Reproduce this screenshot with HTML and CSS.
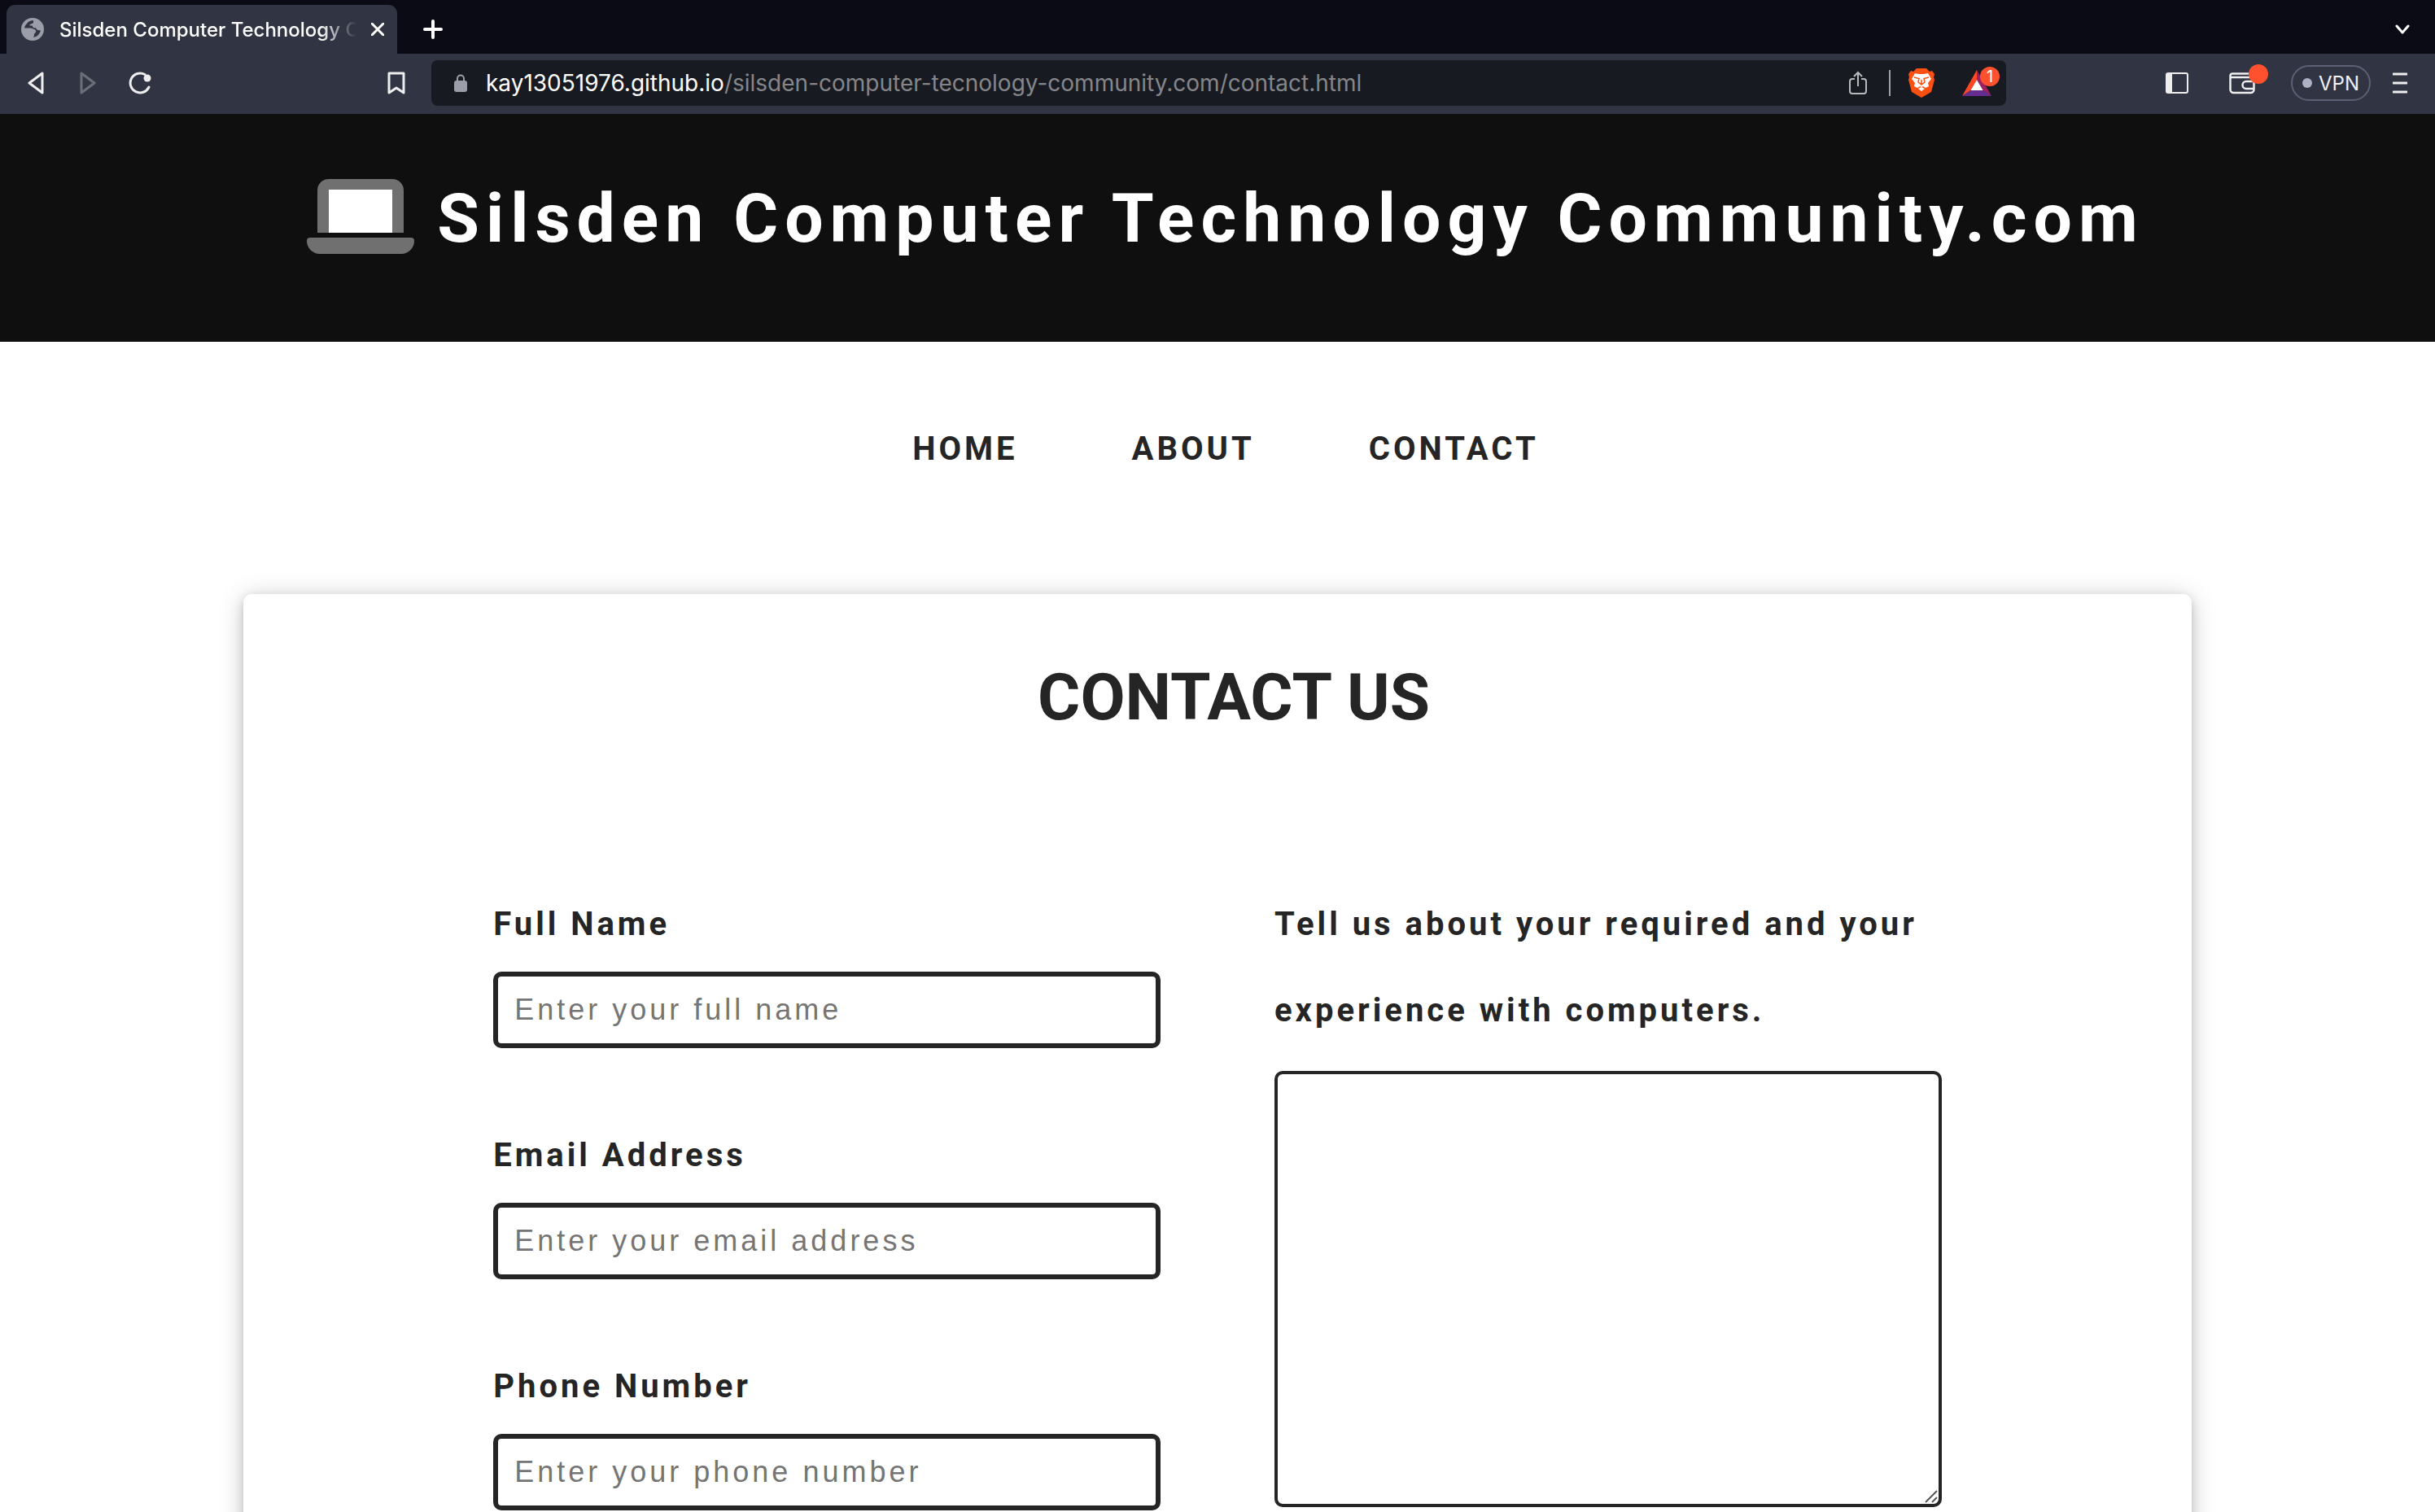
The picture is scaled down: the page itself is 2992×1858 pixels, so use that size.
FILE: index.html
```html
<!DOCTYPE html>
<html lang="en">
<head>
<meta charset="utf-8">
<title>Silsden Computer Technology Community</title>
<link rel="stylesheet" href="styles.css">
</head>
<body>
<div class="browser">
  <div class="tabs">
    <div class="tab">
      <svg class="globe" width="28" height="28" viewBox="0 0 28 28"><circle cx="14" cy="14" r="14" fill="#9b9ea8"/><path d="M15 3c-3 0-6 1-8 4-2 2-3 4-3 6 3 1 7 0 9 2 2 3-2 4-2 6 0 1 2 1 3 3 5 0 9-4 10-9-3 1-6-1-6-3-2 1-4 0-4-2 0-1-3 0-4-1 1-2 3-1 5-3z" fill="#313442"/><path d="M4 12.500h8c2 1 5 1 6 3 1 3-2 3-2 5 0 2-1 4-3 5-6 0-10-6-9-13z" fill="#9b9ea8"/></svg>
      <span class="tab-title">Silsden Computer Technology Community</span>
      <button class="icon-button" aria-label="Close tab"><svg width="16" height="16" viewBox="0 0 16 16"><path d="M1 1l14 14M15 1L1 15" class="line-white"/></svg></button>
    </div>
    <button class="icon-button new-tab" aria-label="New tab"><svg width="24" height="24" viewBox="0 0 24 24"><path d="M12 2v20M2 12h20" fill="none" stroke="#fff" stroke-width="4" stroke-linecap="round"/></svg></button>
    <button class="icon-button tab-list" aria-label="Tab list"><svg width="20" height="12" viewBox="0 0 20 12"><path d="M3 2l7 8 7-8" class="line-white"/></svg></button>
  </div>
  <div class="toolbar">
    <div class="history">
      <button class="icon-button" aria-label="Back"><svg width="20" height="28" viewBox="0 0 20 28"><path d="M18 2v24L2 14z" class="line"/></svg></button>
      <button class="icon-button" aria-label="Forward"><svg width="20" height="28" viewBox="0 0 20 28"><path d="M2 2v24l16-12z" class="line dim"/></svg></button>
      <button class="icon-button" aria-label="Reload"><svg width="28" height="28" viewBox="0 0 28 28"><path d="M20 3.500A12 12 0 1 0 25 19" class="line"/><circle cx="23" cy="8" r="4.500" fill="#eee"/></svg></button>
    </div>
    <button class="icon-button" aria-label="Bookmark"><svg width="22" height="28" viewBox="0 0 22 28"><path d="M2 2h18v24l-9-6-9 6z" class="line"/></svg></button>
    <div class="address">
      <svg width="16" height="22" viewBox="0 0 16 22"><rect y="8" width="16" height="14" rx="3" fill="#9b9ea8"/><path d="M4 9V5.500a4 4 0 0 1 8 0V9" fill="none" stroke="#9b9ea8" stroke-width="2"/></svg>
      <span class="url"><span class="host">kay13051976.github.io</span>/silsden-computer-tecnology-community.com/contact.html</span>
      <div class="address-actions">
        <button class="icon-button" aria-label="Share"><svg width="22" height="30" viewBox="0 0 22 30"><path d="M7 10H4a3 3 0 0 0-3 3v12a3 3 0 0 0 3 3h14a3 3 0 0 0 3-3V13a3 3 0 0 0-3-3h-3M11 19V2M6 7l5-5 5 5" fill="none" stroke="#b8b9bc" stroke-width="2"/></svg></button>
        <span class="divider"></span>
        <button class="icon-button lion" aria-label="Brave Shields"><svg width="32" height="36" viewBox="0 0 32 36"><path d="M10 0h12l4 4 3-1 3 4-1 4 1 3-4 15-12 7-12-7L0 14l1-3-1-4 3-4 3 1z" fill="#fb5012"/><path d="M8 6l5 1h6l5-1 4 7-4 5 1 4-4 2-3-2-2 1-2-1-3 2-4-2 1-4-4-5zM16 23l4 2-4 3-4-3z" fill="#fff"/><path d="M7 11l6 1.500-1 4.500 4 3 4-3-1-4.500 6-1.500M16 14v5" fill="none" stroke="#fb5012" stroke-width="1.500"/></svg></button>
        <button class="icon-button rewards" aria-label="Brave Rewards"><svg width="36" height="32" viewBox="0 0 38 32" preserveAspectRatio="none"><path d="M19 0v12l-8 13L0 32z" fill="#ff4724"/><path d="M19 0l19 32-11-7-8-13z" fill="#9e1f63"/><path d="M0 32l11-7h16l11 7z" fill="#662d91"/><path d="M19 12l8 13H11z" fill="#fff"/></svg><span class="badge">1</span></button>
      </div>
    </div>
    <div class="actions">
      <button class="icon-button" aria-label="Sidebar"><svg width="28" height="26" viewBox="0 0 28 26"><rect x="1" y="1" width="26" height="24" rx="2" fill="none" stroke="#eee" stroke-width="2"/><path d="M1 1h7v24H1z" fill="#eee"/></svg></button>
      <button class="icon-button wallet" aria-label="Wallet"><svg width="32" height="27" viewBox="0 0 32 27"><path d="M24 1.500H4A2.500 2.500 0 0 0 1.500 4v17A4 4 0 0 0 5.500 25h21a4 4 0 0 0 4-4V9a3 3 0 0 0-3-3h-26M30 11h-9a4.500 4.500 0 0 0 0 9h9" fill="none" stroke="#eee" stroke-width="2.500"/></svg><span class="badge"></span></button>
      <button class="vpn"><span class="dot"></span>VPN</button>
      <button class="icon-button" aria-label="Menu"><svg width="18" height="26" viewBox="0 0 18 26"><path d="M1 2h16M1 13h16M1 24h16" class="line"/></svg></button>
    </div>
  </div>
</div>

<header class="masthead">
  <svg class="laptop" width="132" height="92" viewBox="0 0 132 92"><path d="M13 66V14A14 14 0 0 1 27 0h78a14 14 0 0 1 14 14v52z" fill="#707070"/><path d="M27 13h78v53H27z" fill="#fff"/><path d="M4 72h124a4 4 0 0 1 4 4 16 16 0 0 1-16 16H16A16 16 0 0 1 0 76a4 4 0 0 1 4-4z" fill="#707070"/></svg>
  <h1>Silsden Computer Technology Community.com</h1>
</header>

<nav class="menu">
  <a href="#home">HOME</a>
  <a href="#about">ABOUT</a>
  <a href="#contact">CONTACT</a>
</nav>

<main class="card">
  <h2>CONTACT US</h2>
  <form class="contact-form">
    <div class="column">
      <div class="field"><label for="name">Full Name</label><input id="name" type="text" placeholder="Enter your full name"></div>
      <div class="field"><label for="email">Email Address</label><input id="email" type="email" placeholder="Enter your email address"></div>
      <div class="field"><label for="phone">Phone Number</label><input id="phone" type="tel" placeholder="Enter your phone number"></div>
    </div>
    <div class="column">
      <label for="message">Tell us about your required and your experience with computers.</label>
      <div class="message"><textarea id="message"></textarea><svg class="grip" width="16" height="16" viewBox="0 0 16 16"><path d="M1 15L15 1M9 15l6-6" fill="none" stroke="#555" stroke-width="2"/></svg></div>
    </div>
  </form>
</main>
</body>
</html>
```
FILE: styles.css
```css
* { box-sizing: border-box; }

body {
  margin: 0;
  background: #fff;
  color: #252525;
  font-family: Roboto, sans-serif;
  font-size: 40px;
  overflow: hidden;
}

/* Browser frame */
.browser { font-family: Inter, sans-serif; font-size: 24px; }

.tabs {
  display: flex;
  align-items: flex-end;
  height: 66px;
  padding: 0 30px 0 8px;
  background: #0b0b15;
}

.tab {
  display: flex;
  align-items: center;
  width: 480px;
  height: 60px;
  padding: 0 16px 0 18px;
  border-radius: 10px 10px 0 0;
  background: #313442;
  color: #fff;
  font-weight: 500;
}

.globe { flex: none; margin-right: 19px; }

.tab-title {
  flex: 1;
  overflow: hidden;
  white-space: nowrap;
  margin-right: 18px;
  -webkit-mask-image: linear-gradient(to right, #000 88%, transparent);
  mask-image: linear-gradient(to right, #000 88%, transparent);
}

.icon-button {
  display: flex;
  position: relative;
  flex: none;
  padding: 0;
  border: 0;
  background: none;
}

.new-tab { margin: 0 0 18px 32px; }
.tab-list { margin: 0 0 24px auto; }

.line, .line-white {
  fill: none;
  stroke: #eee;
  stroke-width: 3;
  stroke-linecap: round;
  stroke-linejoin: round;
}
.line-white { stroke: #fff; }
.dim { stroke: #6c6e7a; }

.toolbar {
  display: flex;
  align-items: center;
  height: 74px;
  padding: 0 34px 2px;
  background: #313442;
}

.history { display: flex; flex: none; gap: 44px; width: 442px; }
.history .icon-button:last-child { margin-left: -4px; }

.address {
  display: flex;
  flex: 1;
  align-items: center;
  height: 56px;
  margin: 0 196px 0 32px;
  padding: 0 8px 0 28px;
  border-radius: 8px;
  background: #181a21;
}

.url { flex: 1; margin-left: 23px; color: #85868a; font-size: 28px; white-space: nowrap; }
.host { color: #fff; }

.address-actions { display: flex; align-items: center; }
.divider { width: 2px; height: 32px; margin: 0 22px 0 27px; background: #a0a1a6; }
.lion { margin-right: 34px; }
.rewards { margin-right: 10px; }

.badge {
  position: absolute;
  top: -4px;
  left: 22px;
  width: 24px;
  height: 24px;
  border-radius: 12px;
  background: #ff512d;
  color: #fff;
  font: 20px/24px Inter, sans-serif;
  text-align: center;
}
.wallet .badge { top: -10px; left: 24px; }

.actions { display: flex; flex: none; align-items: center; }
.wallet { margin: 0 44px 0 50px; }

.vpn {
  display: flex;
  align-items: center;
  gap: 8px;
  height: 44px;
  margin-right: 27px;
  padding: 0 12px;
  border: 2px solid #5d6075;
  border-radius: 22px;
  background: none;
  color: #f2f2fa;
  font: 24px Inter, sans-serif;
}
.dot { width: 12px; height: 12px; border-radius: 50%; background: #aeb0c4; }

/* Page header */
.masthead {
  display: flex;
  justify-content: center;
  align-items: flex-start;
  gap: 28px;
  height: 280px;
  padding: 80px 0 0 20px;
  background: #0f0f0f;
  color: #fff;
}

.laptop { flex: none; }

h1 {
  margin: 0;
  font-size: 84px;
  line-height: 98px;
  letter-spacing: 8px;
  white-space: nowrap;
}

.menu {
  display: flex;
  justify-content: center;
  gap: 140px;
  padding: 79px 0 125px 20px;
}

.menu a {
  color: inherit;
  font-weight: 700;
  line-height: 106px;
  letter-spacing: 4px;
  text-decoration: none;
}

/* Contact card */
.card {
  width: 80%;
  margin: 0 auto;
  padding: 80px 307px;
  border-radius: 10px;
  background: #fff;
  box-shadow: 0 4px 12px rgba(0, 0, 0, .16), 0 4px 32px rgba(0, 0, 0, .2);
}

h2 {
  margin: 0 0 179px;
  padding-left: 40px;
  font-size: 80px;
  line-height: 94px;
  text-align: center;
}

.contact-form { display: grid; grid-template-columns: 1fr 1fr; gap: 140px; }

.field { margin-bottom: 79px; }

label {
  display: block;
  font-weight: 700;
  line-height: 106px;
  letter-spacing: 4px;
}

input, textarea {
  display: block;
  width: 100%;
  border: 6px solid #252525;
  border-radius: 10px;
  background: #fff;
  color: inherit;
  font: 36px "Liberation Sans", sans-serif;
  letter-spacing: 4px;
}

input { height: 94px; margin-top: 5px; padding: 0 20px; }
::placeholder { color: #757575; opacity: 1; }

.message { position: relative; margin-top: 21px; }
textarea { height: 536px; padding: 20px; border-width: 4px; resize: none; }
.grip { position: absolute; right: 5px; bottom: 5px; }
```
